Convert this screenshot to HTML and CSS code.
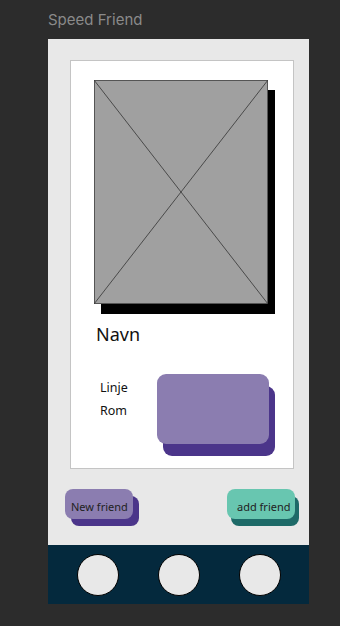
FILE: index.html
```html
<!DOCTYPE html>
<html lang="no">
<head>
    <meta charset="UTF-8">
    <meta name="viewport" content="width=device-width, initial-scale=1.0">
    <title>Speed Friend</title>
    <link rel="stylesheet" href="styles.css">
</head>
<body>
    <div class="frame-title">Speed Friend</div>

    <div class="phone">
        <div class="profile-card">
            <div class="photo">
                <svg width="174" height="224" viewBox="0 0 174 224">
                    <rect x="0.5" y="0.5" width="173" height="223" fill="#a0a0a0" stroke="#555" stroke-width="1"/>
                    <line x1="0" y1="0" x2="174" y2="224" stroke="#333" stroke-width="0.8"/>
                    <line x1="174" y1="0" x2="0" y2="224" stroke="#333" stroke-width="0.8"/>
                </svg>
            </div>

            <div class="name">Navn</div>

            <div class="info-row">
                <div class="info-labels">
                    <span>Linje</span>
                    <span>Rom</span>
                </div>
                <div class="info-box"></div>
            </div>
        </div>

        <div class="actions">
            <button class="btn btn-new">New friend</button>
            <button class="btn btn-add">add friend</button>
        </div>

        <nav class="bottom-nav">
            <span class="nav-dot"></span>
            <span class="nav-dot"></span>
            <span class="nav-dot"></span>
        </nav>
    </div>
</body>
</html>
```

FILE: styles.css
```css
body {
    margin: 0;
    background-color: #2c2c2c;
    font-family: 'Noto Sans', 'DejaVu Sans', sans-serif;
    width: 340px;
    height: 626px;
    overflow: hidden;
}

.frame-title {
    font-family: Inter, 'Liberation Sans', sans-serif;
    font-size: 15px;
    color: #8a8a8a;
    padding: 10px 0 0 48px;
    height: 39px;
    box-sizing: border-box;
    line-height: 20px;
}

.phone {
    margin-left: 48px;
    width: 261px;
    height: 565px;
    background-color: #e8e8e8;
    display: flex;
    flex-direction: column;
}

.profile-card {
    margin: 21px 0 0 22px;
    width: 224px;
    height: 409px;
    box-sizing: border-box;
    background-color: #fff;
    border: 1px solid #c4c4c4;
    padding: 19px 0 0 23px;
}

.photo {
    width: 174px;
    height: 224px;
    box-shadow: 7px 10px 0 #000;
}

.photo svg {
    display: block;
}

.name {
    margin: 16px 0 0 2px;
    font-size: 18px;
    line-height: 28px;
    color: #111;
}

.info-row {
    display: flex;
    margin-top: 26px;
}

.info-labels {
    display: flex;
    flex-direction: column;
    padding: 2px 0 0 6px;
    width: 57px;
    font-size: 12.5px;
    line-height: 23px;
    color: #111;
}

.info-box {
    width: 112px;
    height: 70px;
    border-radius: 9px;
    background-color: #8b7db0;
    box-shadow: 6px 12px 0 #4b358a;
}

.actions {
    display: flex;
    justify-content: space-between;
    margin: 20px 0 0 17px;
    width: 230px;
}

.btn {
    font-family: 'Noto Sans', 'DejaVu Sans', sans-serif;
    font-size: 11px;
    color: #222;
    height: 30px;
    width: 68px;
    border: none;
    border-radius: 8px;
    padding: 4px 0 0 6px;
    text-align: left;
    cursor: pointer;
}

.btn-new {
    background-color: #8b7db0;
    box-shadow: 6px 7px 0 #4b358a;
}

.btn-add {
    background-color: #68c6b0;
    box-shadow: 4px 7px 0 #1e6a68;
    padding-left: 10px;
}

.bottom-nav {
    margin-top: auto;
    margin-bottom: 0;
    height: 59px;
    background-color: #04293d;
    display: flex;
    justify-content: center;
    align-items: center;
    gap: 39px;
}

.nav-dot {
    width: 42px;
    height: 42px;
    box-sizing: border-box;
    border-radius: 50%;
    background-color: #e8e8e8;
    border: 1.5px solid #000;
}
```
